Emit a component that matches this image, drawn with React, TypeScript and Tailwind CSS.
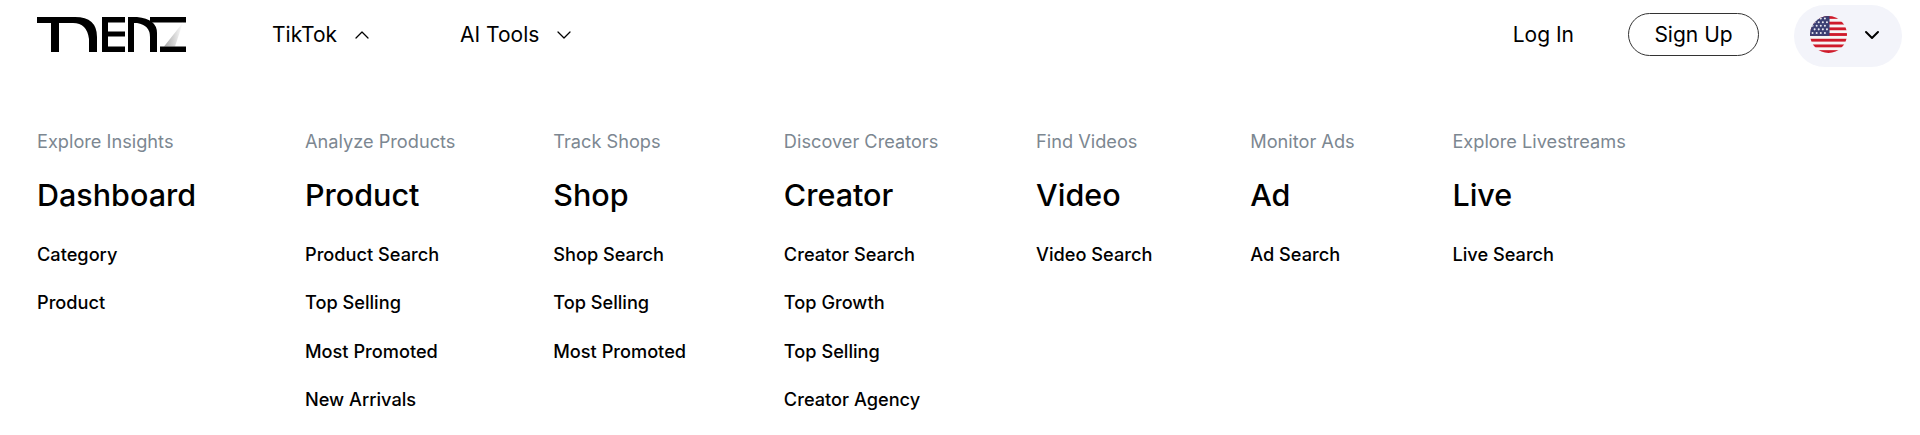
import { ChevronDown, ChevronUp } from "lucide-react";

const columns = [
  { label: "Explore Insights", title: "Dashboard", items: ["Category", "Product"], width: "w-[170.2px]" },
  { label: "Analyze Products", title: "Product", items: ["Product Search", "Top Selling", "Most Promoted", "New Arrivals"], width: "" },
  { label: "Track Shops", title: "Shop", items: ["Shop Search", "Top Selling", "Most Promoted"], width: "" },
  { label: "Discover Creators", title: "Creator", items: ["Creator Search", "Top Growth", "Top Selling", "Creator Agency"], width: "" },
  { label: "Find Videos", title: "Video", items: ["Video Search"], width: "" },
  { label: "Monitor Ads", title: "Ad", items: ["Ad Search"], width: "" },
  { label: "Explore Livestreams", title: "Live", items: ["Live Search"], width: "" },
];

function Logo() {
  return (
    <svg width="150" height="35" viewBox="0 0 150 35" className="shrink-0">
      <defs>
        <linearGradient id="fold" x1="0" y1="0" x2="1" y2="0">
          <stop offset="0" stopColor="#a8a8a8" />
          <stop offset="1" stopColor="#ffffff" />
        </linearGradient>
      </defs>
      {/* T running into the curved Y */}
      <path d="M0 0H38Q60 0 60 20V35H52V22Q50 6 36 6H22V35H14V6H0Z" fill="#000" />
      {/* E */}
      <path d="M65 0H88V5.5H71V14.5H88V19.5H71V29.5H88V35H65Z" fill="#000" />
      {/* N with its curved leg */}
      <path d="M91 0H100Q120 2 120 16V35H113V20Q113 8 100 6H97V35H91Z" fill="#000" />
      {/* Z */}
      <path d="M113 0H149V5.5H113Z" fill="#000" />
      <path d="M146 5.5L127 29.5H138Z" fill="url(#fold)" />
      <path d="M123 29.5H149V35H123Z" fill="#000" />
    </svg>
  );
}

function UsFlag() {
  const stripes = [0, 2, 4, 6, 8, 10, 12];
  return (
    <svg width="37" height="37" viewBox="0 0 36 36" className="shrink-0">
      <defs>
        <clipPath id="flag-circle">
          <circle cx="18" cy="18" r="18" />
        </clipPath>
      </defs>
      <g clipPath="url(#flag-circle)">
        <rect width="36" height="36" fill="#f6f6f6" />
        {stripes.map((s) => (
          <rect key={s} x="0" y={s * 2.77} width="36" height="2.77" fill="#cf1b2b" />
        ))}
        <rect width="19" height="19.4" fill="#3b3f73" />
        {[2.5, 6, 9.5, 13, 16.5].map((y, r) =>
          [2.5, 6.5, 10.5, 14.5].map((x) => (
            <circle key={`${r}-${x}`} cx={r % 2 ? x + 2 : x} cy={y} r="1" fill="#e8e8f0" />
          )),
        )}
      </g>
    </svg>
  );
}

export default function App() {
  return (
    <div className="h-[435px] w-[1920px] overflow-hidden bg-white font-['Inter',sans-serif] text-black">
      <header className="flex h-[69px] items-center pl-[37px] pr-[18px]">
        <Logo />
        <nav className="ml-[85px] flex items-center gap-[86px] text-[21px]">
          <button className="flex items-center gap-[13px]">
            TikTok
            <ChevronUp className="h-[24px] w-[24px]" strokeWidth={1.25} />
          </button>
          <button className="flex items-center gap-[13px]">
            AI Tools
            <ChevronDown className="h-[24px] w-[24px]" strokeWidth={1.25} />
          </button>
        </nav>
        <div className="ml-auto flex items-center">
          <a className="ml-[1px] text-[21px]">Log In</a>
          <a className="ml-[54px] flex h-[43px] w-[131px] items-center justify-center rounded-full border border-[#333] text-[21px]">
            Sign Up
          </a>
          <button className="ml-[35px] mt-[3px] flex h-[62px] w-[108px] items-center gap-[13px] rounded-full bg-[#f3f4fa] pb-[3px] pl-[16px]">
            <UsFlag />
            <ChevronDown className="h-[24px] w-[24px]" strokeWidth={2} />
          </button>
        </div>
      </header>
      <div className="flex gap-[97.8px] pl-[37px] pt-[61px]">
        {columns.map((col) => (
          <div key={col.title} className={col.width}>
            <p className="text-[18.2px] leading-[22px] text-[#7c8791]">{col.label}</p>
            <h2 className="mt-[25px] text-[30.5px] leading-[36px] font-[450]">{col.title}</h2>
            <ul className="mt-[26.6px] flex flex-col gap-[20.6px]">
              {col.items.map((item) => (
                <li key={item} className="text-[18.2px] leading-[28px] font-medium">
                  {item}
                </li>
              ))}
            </ul>
          </div>
        ))}
      </div>
    </div>
  );
}
